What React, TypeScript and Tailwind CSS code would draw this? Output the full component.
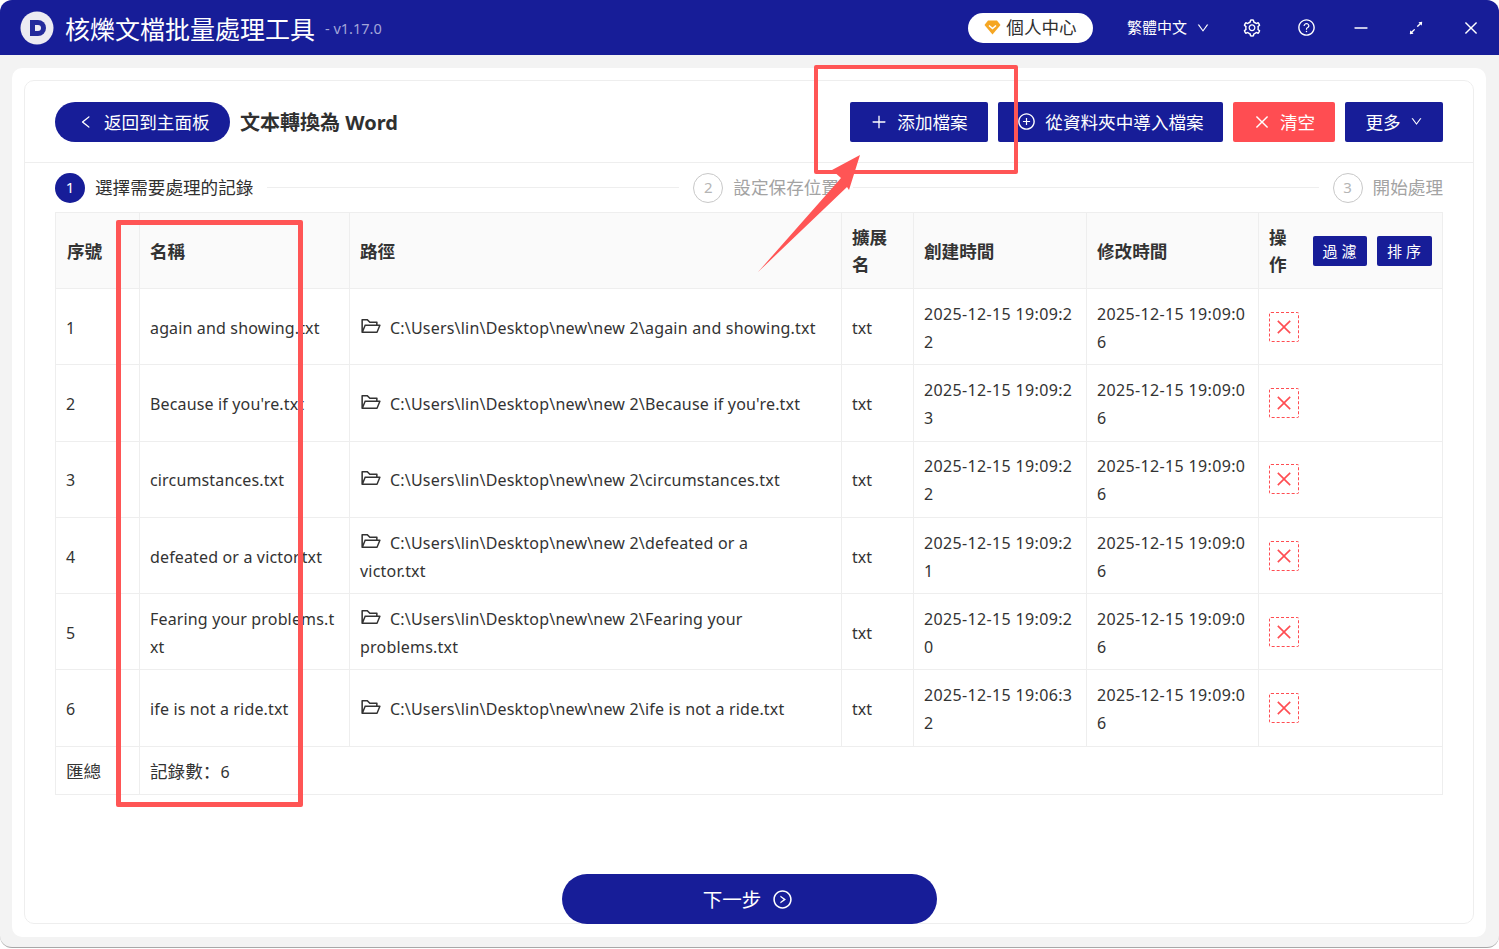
import {
  AiOutlineArrowsAlt,
  AiOutlineClose,
  AiOutlineDown,
  AiOutlineFolderOpen,
  AiOutlineLeft,
  AiOutlineMinus,
  AiOutlinePlus,
  AiOutlinePlusCircle,
  AiOutlineQuestionCircle,
  AiOutlineRightCircle,
  AiOutlineSetting,
} from "react-icons/ai";

const rows = [
  { id: 1, name: "again and showing.txt", path: "C:\\Users\\lin\\Desktop\\new\\new 2\\again and showing.txt", created: "2025-12-15 19:09:22" },
  { id: 2, name: "Because if you're.txt", path: "C:\\Users\\lin\\Desktop\\new\\new 2\\Because if you're.txt", created: "2025-12-15 19:09:23" },
  { id: 3, name: "circumstances.txt", path: "C:\\Users\\lin\\Desktop\\new\\new 2\\circumstances.txt", created: "2025-12-15 19:09:22" },
  { id: 4, name: "defeated or a victor.txt", path: "C:\\Users\\lin\\Desktop\\new\\new 2\\defeated or a victor.txt", created: "2025-12-15 19:09:21" },
  { id: 5, name: "Fearing your problems.txt", path: "C:\\Users\\lin\\Desktop\\new\\new 2\\Fearing your problems.txt", created: "2025-12-15 19:09:20" },
  { id: 6, name: "ife is not a ride.txt", path: "C:\\Users\\lin\\Desktop\\new\\new 2\\ife is not a ride.txt", created: "2025-12-15 19:06:32" },
];

const th = "border border-[#eeeeee] bg-[#fafafa] px-[10px] pt-[1px] text-left font-bold align-middle leading-[27px]";
const td = "border border-[#eeeeee] px-[10px] pt-[2px] align-middle text-[16px] break-all";
const date = td + " tracking-[0.35px]";

const Step = ({ n, label, active }: { n: number; label: string; active?: boolean }) => (
  <div className="flex shrink-0 items-center gap-[10px]">
    <span
      className={
        active
          ? "flex h-[30px] w-[30px] items-center justify-center rounded-full bg-[#171d98] text-[15px] text-white"
          : "flex h-[30px] w-[30px] items-center justify-center rounded-full border border-[#c8c8c8] text-[15px] text-[#b5b5b5]"
      }
    >
      {n}
    </span>
    <span className={active ? "text-[#303030]" : "text-[#a3a3a3]"}>{label}</span>
  </div>
);

const App = () => {
  return (
    <div
      className="relative h-[949px] w-[1499px] overflow-hidden bg-white text-[17.6px] text-[#333333]"
      style={{ fontFamily: '"Noto Sans", "Noto Sans CJK SC", sans-serif' }}
    >
      <div className="flex h-[948px] flex-col overflow-hidden rounded-[12px] border-b border-[#a8a8a8] bg-[#f3f3f3]">
        <header className="flex h-[55px] shrink-0 items-center bg-[#171d98] pl-[20px] text-white">
          <svg width="34" height="34" viewBox="0 0 34 34" className="shrink-0">
            <circle cx="17" cy="17" r="16.5" fill="#ecebf2" />
            <path d="M10 9h8a8 8 0 0 1 0 16h-8z" fill="#232a9c" />
            <path d="M15 14h3a3 3 0 0 1 0 6h-3z" fill="#ecebf2" />
          </svg>
          <h1 className="ml-[11px] mt-[3px] text-[25px] leading-none">核爍文檔批量處理工具</h1>
          <span className="ml-[10px] mt-[3px] text-[14.5px] text-[#a3a6d8]">- v1.17.0</span>
          <div className="ml-auto flex items-center">
            <button className="flex h-[30px] w-[125px] items-center justify-center gap-[5px] rounded-full bg-white text-[17.6px] text-[#303030]">
              <svg width="17" height="15" viewBox="0 0 17 15">
                <path d="M4 0.5h9l3.5 4.5-8 9.5-8-9.5z" fill="#f5a623" />
                <path d="M5 5.5l3.5 3 3.5-3" fill="none" stroke="#fff" strokeWidth="1.6" />
              </svg>
              個人中心
            </button>
            <div className="ml-[34px] flex items-center gap-[9px] text-[15px]">
              繁體中文
              <AiOutlineDown size={14} />
            </div>
            <AiOutlineSetting size={20} className="ml-[32px]" />
            <AiOutlineQuestionCircle size={19} className="ml-[35px]" />
            <AiOutlineMinus size={18} className="ml-[36px]" />
            <AiOutlineArrowsAlt size={18} className="ml-[37px]" />
            <AiOutlineClose size={18} className="ml-[37px] mr-[19px]" />
          </div>
        </header>

        <main className="ml-[12px] mr-[13px] mt-[13px] flex h-[869px] flex-col rounded-[10px] bg-white px-[12px] pb-[13px] pt-[12px]">
          <section className="flex h-full flex-col rounded-[10px] border border-[#eeeeee]">
            <div className="flex h-[82px] shrink-0 items-center border-b border-[#eeeeee] px-[30px]">
              <button className="flex h-[40px] w-[175px] items-center gap-[10px] rounded-full bg-[#171d98] pl-[23px] text-white">
                <AiOutlineLeft size={16} />
                <span className="pt-[2px]">返回到主面板</span>
              </button>
              <h2 className="ml-[10px] pt-[2px] text-[20px] font-bold text-[#303030]">文本轉換為 Word</h2>
              <div className="ml-auto flex gap-[10px]">
                <button className="flex h-[40px] w-[138px] items-center justify-center gap-[9px] rounded-[2px] bg-[#171d98] text-white">
                  <AiOutlinePlus size={18} />
                  <span className="pt-[2px]">添加檔案</span>
                </button>
                <button className="flex h-[40px] w-[225px] items-center justify-center gap-[9px] rounded-[2px] bg-[#171d98] text-white">
                  <AiOutlinePlusCircle size={19} />
                  <span className="pt-[2px]">從資料夾中導入檔案</span>
                </button>
                <button className="flex h-[40px] w-[102px] items-center justify-center gap-[9px] rounded-[2px] bg-[#ff4d52] text-white">
                  <AiOutlineClose size={18} />
                  <span className="pt-[2px]">清空</span>
                </button>
                <button className="flex h-[40px] w-[98px] items-center justify-center gap-[9px] rounded-[2px] bg-[#171d98] text-white">
                  <span className="pt-[2px]">更多</span>
                  <AiOutlineDown size={13} />
                </button>
              </div>
            </div>

            <div className="flex h-[49px] shrink-0 items-center gap-[14px] px-[30px]">
              <Step n={1} label="選擇需要處理的記錄" active />
              <div className="h-px w-[412px] shrink-0 bg-[#eeeeee]" />
              <Step n={2} label="設定保存位置" />
              <div className="h-px flex-1 bg-[#eeeeee]" />
              <Step n={3} label="開始處理" />
            </div>

            <div className="px-[30px]">
              <table className="w-[1387px] table-fixed border-collapse leading-[28px]">
                <colgroup>
                  <col className="w-[84px]" />
                  <col className="w-[210px]" />
                  <col className="w-[492px]" />
                  <col className="w-[72px]" />
                  <col className="w-[173px]" />
                  <col className="w-[172px]" />
                  <col className="w-[184px]" />
                </colgroup>
                <thead>
                  <tr className="h-[76px]">
                    <th className={th + " pl-[11px]"}>序號</th>
                    <th className={th}>名稱</th>
                    <th className={th}>路徑</th>
                    <th className={th}>擴展名</th>
                    <th className={th}>創建時間</th>
                    <th className={th}>修改時間</th>
                    <th className={th}>
                      <div className="flex items-center">
                        <span className="w-[18px]">操作</span>
                        <button className="ml-[26px] h-[30px] w-[54px] rounded-[2px] bg-[#171d98] pl-[3px] text-[15px] font-normal tracking-[4px] text-white">
                          過濾
                        </button>
                        <button className="ml-[10px] h-[30px] w-[55px] rounded-[2px] bg-[#171d98] pl-[3px] text-[15px] font-normal tracking-[4px] text-white">
                          排序
                        </button>
                      </div>
                    </th>
                  </tr>
                </thead>
                <tbody>
                  {rows.map((row) => (
                    <tr key={row.id} className="h-[76.3px]">
                      <td className={td}>{row.id}</td>
                      <td className={td + " tracking-[0.15px]"}>{row.name}</td>
                      <td className="border border-[#eeeeee] pl-[10px] pr-[24px] pt-[2px] align-middle text-[16px] tracking-[0.2px]">
                        <AiOutlineFolderOpen size={22} className="mr-[8px] inline-block align-[-3px]" />
                        {row.path}
                      </td>
                      <td className={td}>txt</td>
                      <td className={date}>{row.created}</td>
                      <td className={date}>2025-12-15 19:09:06</td>
                      <td className="border border-[#eeeeee] px-[10px] align-middle">
                        <button className="flex h-[30px] w-[30px] items-center justify-center rounded-[2px] border border-dashed border-[#ff4d52] text-[#ff4d52]">
                          <AiOutlineClose size={20} />
                        </button>
                      </td>
                    </tr>
                  ))}
                  <tr className="h-[48px]">
                    <td className={td + " text-[17.6px]"}>匯總</td>
                    <td className={td} colSpan={6}>
                      <span className="text-[17.6px]">記錄數：</span>6
                    </td>
                  </tr>
                </tbody>
              </table>
            </div>

            <div className="mt-auto flex justify-center">
              <button className="-mb-px flex h-[50px] w-[375px] items-center justify-center gap-[11px] rounded-full bg-[#171d98] pr-[2px] pt-[1px] text-[19.5px] text-white">
                下一步
                <AiOutlineRightCircle size={21} />
              </button>
            </div>
          </section>
        </main>
      </div>

      {/* red marks drawn over the screenshot */}
      <div className="absolute left-[814px] top-[65px] h-[109px] w-[204px] rounded-[2px] border-[4px] border-[#ff5555]" />
      <div className="absolute left-[115.5px] top-[220px] h-[587px] w-[187.5px] rounded-[2px] border-[5px] border-[#ff5555]" />
      <svg className="absolute left-[750px] top-[150px]" width="120" height="130" viewBox="0 0 120 130">
        <polygon points="110,5 82,20 91,28 8,122 97,37 99,40" fill="#ff5555" />
      </svg>
    </div>
  );
};

export default App;
